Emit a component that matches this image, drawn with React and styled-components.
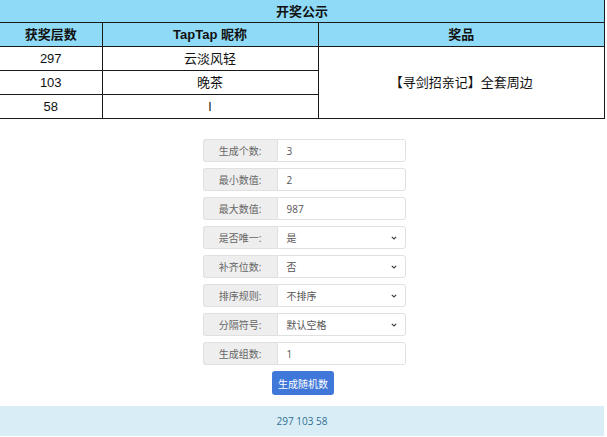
import React from "react";
import styled, { createGlobalStyle } from "styled-components";

const Global = createGlobalStyle`
  html, body { margin: 0; padding: 0; background: #fff; }
  body { font-family: "Liberation Sans", "Noto Sans CJK SC", sans-serif; }
`;

const Table = styled.table`
  border-collapse: collapse;
  width: 605px;
  table-layout: fixed;
  font-family: "Liberation Sans", "Noto Sans CJK SC", sans-serif;
  font-size: 13px;
  color: #111;
`;

const Cell = styled.td`
  border: 1px solid #1a1a1a;
  border-left: ${(p) => (p.$first ? "none" : "1px solid #1a1a1a")};
  border-top: ${(p) => (p.$top ? "none" : "1px solid #1a1a1a")};
  background: ${(p) => (p.$head ? "#8fdbf7" : "#fff")};
  font-weight: ${(p) => (p.$head ? "bold" : "normal")};
  text-align: center;
  height: ${(p) => p.$h || 23}px;
  padding: 0;
  line-height: 1;
`;

const Form = styled.div`
  width: 203px;
  margin: 20px auto 0;
  padding-left: 1px;
  display: flex;
  flex-direction: column;
  gap: 6px;
  font-family: "Open Sans", "Noto Sans CJK SC", sans-serif;
  font-size: 10px;
  color: #555;
`;

const Group = styled.div`
  display: flex;
  height: 23px;
`;

const Addon = styled.div`
  width: 73px;
  flex: none;
  background: #eee;
  border: 1px solid #e0e0e0;
  border-right: none;
  border-radius: 3px 0 0 3px;
  display: flex;
  align-items: center;
  justify-content: center;
  color: #666;
`;

const Field = styled.div`
  flex: 1;
  border: 1px solid #e0e0e0;
  border-radius: 0 3px 3px 0;
  display: flex;
  align-items: center;
  padding: 0 8px 0 9px;
  color: #555;
  background: #fff;
`;

const Value = styled.span`
  flex: 1;
`;

const Chevron = () => (
  <svg width="6" height="4" viewBox="0 0 6 4">
    <path d="M0.8 0.8 L3 3 L5.2 0.8" fill="none" stroke="#444" strokeWidth="1.2" />
  </svg>
);

const Button = styled.button`
  align-self: center;
  margin: 0 0 0 -2px;
  margin-top: 0px;
  width: 62px;
  height: 24px;
  border: none;
  border-radius: 3px;
  background: #3f78d8;
  color: #fff;
  font-family: "Open Sans", "Noto Sans CJK SC", sans-serif;
  font-size: 10px;
  padding: 0;
`;

const Result = styled.div`
  margin-top: 11px;
  width: 604px;
  height: 30px;
  background: #d9edf7;
  color: #31708f;
  display: flex;
  align-items: center;
  justify-content: center;
  font-family: "Open Sans", "Noto Sans CJK SC", sans-serif;
  font-size: 10px;
`;

const rows = [
  { label: "生成个数:", value: "3" },
  { label: "最小数值:", value: "2" },
  { label: "最大数值:", value: "987" },
  { label: "是否唯一:", value: "是", select: true },
  { label: "补齐位数:", value: "否", select: true },
  { label: "排序规则:", value: "不排序", select: true },
  { label: "分隔符号:", value: "默认空格", select: true },
  { label: "生成组数:", value: "1" },
];

export default function App() {
  return (
    <>
      <Global />
      <Table>
        <colgroup>
          <col style={{ width: 102 }} />
          <col style={{ width: 216 }} />
          <col />
        </colgroup>
        <tbody>
          <tr>
            <Cell $head $first $top colSpan={3} $h={22}>开奖公示</Cell>
          </tr>
          <tr>
            <Cell $head $first>获奖层数</Cell>
            <Cell $head>TapTap 昵称</Cell>
            <Cell $head>奖品</Cell>
          </tr>
          <tr>
            <Cell $first>297</Cell>
            <Cell>云淡风轻</Cell>
            <Cell rowSpan={3}>【寻剑招亲记】全套周边</Cell>
          </tr>
          <tr>
            <Cell $first>103</Cell>
            <Cell>晚茶</Cell>
          </tr>
          <tr>
            <Cell $first>58</Cell>
            <Cell>l</Cell>
          </tr>
        </tbody>
      </Table>
      <Form>
        {rows.map((r) => (
          <Group key={r.label}>
            <Addon>{r.label}</Addon>
            <Field>
              <Value>{r.value}</Value>
              {r.select && <Chevron />}
            </Field>
          </Group>
        ))}
        <Button>生成随机数</Button>
      </Form>
      <Result>297 103 58</Result>
    </>
  );
}
